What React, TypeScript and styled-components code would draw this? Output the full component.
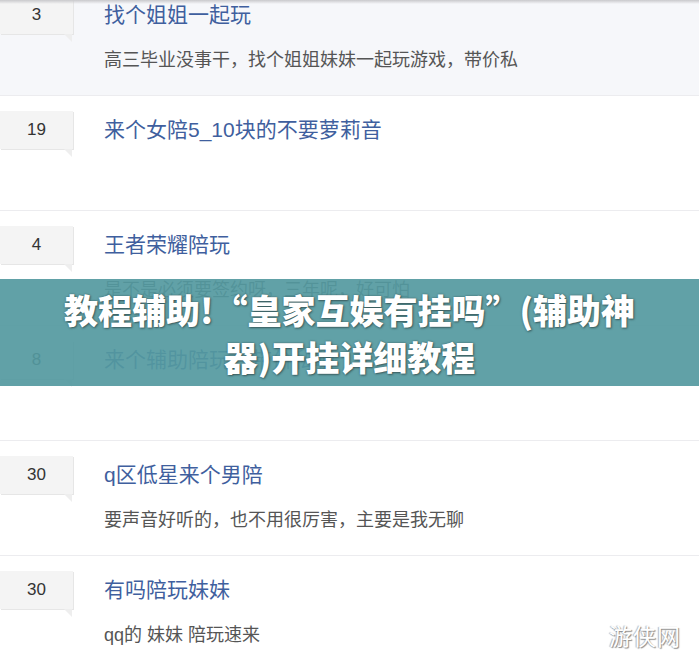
import styled, { createGlobalStyle } from 'styled-components';

interface Post {
  count: number;
  title: string;
  desc: string;
}

const POSTS: Post[] = [
  { count: 3, title: '找个姐姐一起玩', desc: '高三毕业没事干，找个姐姐妹妹一起玩游戏，带价私' },
  { count: 19, title: '来个女陪5_10块的不要萝莉音', desc: '' },
  { count: 4, title: '王者荣耀陪玩', desc: '是不是必须要签约呀，三年呢，好可怕' },
  { count: 8, title: '来个辅助陪玩，带价私聊', desc: '' },
  { count: 30, title: 'q区低星来个男陪', desc: '要声音好听的，也不用很厉害，主要是我无聊' },
  { count: 30, title: '有吗陪玩妹妹', desc: 'qq的 妹妹 陪玩速来' },
];

const GlobalStyle = createGlobalStyle`
  html, body {
    margin: 0;
    padding: 0;
    background: #fff;
    overflow: hidden;
  }
  body {
    font-family: 'Liberation Sans', 'Noto Sans CJK SC', sans-serif;
  }
`;

const Page = styled.div`
  position: relative;
  width: 699px;
  height: 666px;
  overflow: hidden;
  background: #fff;
`;

const TopShadow = styled.div`
  position: absolute;
  top: 0;
  left: 0;
  right: 0;
  height: 4px;
  background: linear-gradient(#c9c9cc, rgba(220, 220, 224, 0));
  z-index: 2;
`;

const List = styled.ul`
  list-style: none;
  margin: -19px 0 0;
  padding: 0;
`;

const Row = styled.li<{ $active?: boolean }>`
  display: flex;
  height: 114px;
  border-bottom: 1px solid #ececef;
  background: ${(p) => (p.$active ? '#f6f7fa' : '#fff')};
`;

const Badge = styled.div`
  position: relative;
  flex: none;
  width: 73px;
  height: 38px;
  margin-top: 15px;
  display: flex;
  align-items: center;
  justify-content: center;
  background: #f4f4f4;
  box-shadow: 1px 1px 0 #e6e6e6;
  font-size: 17px;
  color: #333;

  &::after {
    content: '';
    position: absolute;
    right: 1px;
    bottom: -8px;
    border-top: 8px solid #eeeeee;
    border-left: 8px solid transparent;
  }
`;

const Body = styled.div`
  display: flex;
  flex-direction: column;
  padding: 19px 0 0 31px;
`;

const Title = styled.a`
  font-size: 21px;
  line-height: 30px;
  color: #3f5f9e;
  text-decoration: none;
  font-family: 'Liberation Sans', 'Noto Sans CJK SC', sans-serif;
`;

const Desc = styled.p`
  margin: 16px 0 0;
  font-size: 18px;
  line-height: 28px;
  color: #555;
  font-family: 'Liberation Sans', 'Noto Sans CJK SC', sans-serif;
`;

const Banner = styled.div`
  position: absolute;
  left: 0;
  right: 0;
  top: 279px;
  height: 107px;
  display: flex;
  align-items: center;
  justify-content: center;
  background: rgba(84, 153, 160, 0.92);
  z-index: 3;
`;

const BannerText = styled.h1`
  margin: 0;
  width: 590px;
  text-align: center;
  font-family: 'Noto Sans CJK SC', sans-serif;
  font-weight: 900;
  font-size: 34px;
  line-height: 47px;
  color: #fff;
  text-shadow: 0 0 2px rgba(40, 60, 60, 0.6), 1px 1px 2px rgba(30, 40, 40, 0.5);
`;

const Watermark = styled.div`
  position: absolute;
  right: 18px;
  bottom: 14px;
  font-family: 'Noto Sans CJK SC', sans-serif;
  font-size: 23px;
  letter-spacing: 1px;
  color: #fff;
  text-shadow: 1px 1px 1px #8a8a8a, -1px 0 1px #b5b5b5;
  z-index: 3;
`;

export default function App() {
  return (
    <Page>
      <GlobalStyle />
      <TopShadow />
      <List>
        {POSTS.map((post, i) => (
          <Row key={i} $active={i === 0}>
            <Badge>{post.count}</Badge>
            <Body>
              <Title href="#">{post.title}</Title>
              {post.desc && <Desc>{post.desc}</Desc>}
            </Body>
          </Row>
        ))}
      </List>
      <Banner>
        <BannerText>教程辅助!“皇家互娱有挂吗”(辅助神器)开挂详细教程</BannerText>
      </Banner>
      <Watermark>游侠网</Watermark>
    </Page>
  );
}
